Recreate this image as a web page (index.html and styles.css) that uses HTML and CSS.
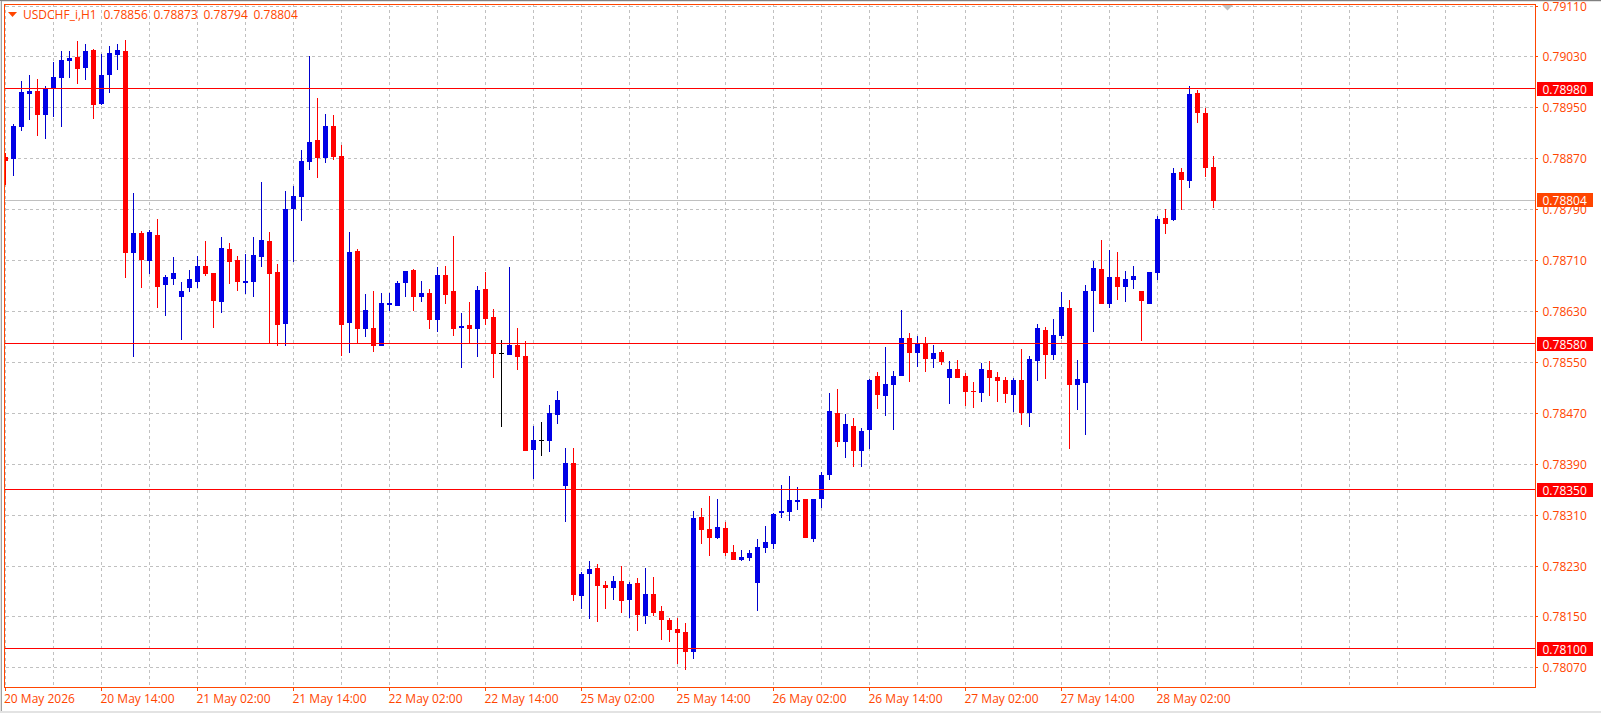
FILE: index.html
```html
<!DOCTYPE html>
<html lang="en">
<head>
<meta charset="utf-8">
<title>USDCHF_i,H1</title>
<link rel="stylesheet" href="styles.css">
</head>
<body>
<main class="window">
<svg class="chart" id="chart" width="1601" height="713" viewBox="0 0 1601 713" xmlns="http://www.w3.org/2000/svg">
  <g id="grid" class="grid"></g>
  <path class="bid-line" d="M5 200.5H1535"/>
  <g id="candles"></g>
  <g id="levels" class="level"></g>
  <path class="shift" d="M1222 5H1233L1227.5 10.5Z"/>
  <rect class="frame" x="4.5" y="4.5" width="1531" height="683"/>
  <g id="ticks" class="tick"></g>
  <g id="price-labels" class="axis-text"></g>
  <g id="time-labels" class="axis-text"></g>
  <g id="tags"></g>
  <path class="legend-arrow" d="M8 12H17L12.5 17Z"/>
  <text class="axis-text" x="23" y="19">USDCHF_i,H1</text>
  <text class="axis-text" x="103.5" y="19">0.78856</text>
  <text class="axis-text" x="153.5" y="19">0.78873</text>
  <text class="axis-text" x="203.5" y="19">0.78794</text>
  <text class="axis-text" x="253.5" y="19">0.78804</text>
</svg>
</main>
<script src="chart.js"></script>
</body>
</html>
```
FILE: styles.css
```css
html, body {
  margin: 0;
  padding: 0;
  background: #ffffff;
  overflow: hidden;
}
.window {
  width: 1601px;
  height: 713px;
}
.chart {
  display: block;
  shape-rendering: crispEdges;
}
.grid path {
  fill: none;
  stroke: #c0c0c0;
  stroke-width: 1;
  stroke-dasharray: 3 3;
}
.wick-up { fill: #0000cd; }
.body-up { fill: #0000e6; }
.wick-down, .body-down { fill: #ff0000; }
.wick-flat, .body-flat { fill: #000000; }
.bid-line {
  fill: none;
  stroke: #c0c0c0;
  stroke-width: 1;
}
.level path {
  fill: none;
  stroke: #ff0000;
  stroke-width: 1;
}
.shift { fill: #c0c0c0; shape-rendering: auto; }
.frame {
  fill: none;
  stroke: #ff4500;
  stroke-width: 1;
}
.tick path {
  fill: none;
  stroke: #ff4500;
  stroke-width: 1;
}
.axis-text {
  font-family: "Open Sans", sans-serif;
  font-size: 12px;
  fill: #ff4500;
}
.tag-level { fill: #ff0000; }
.tag-bid { fill: #ff4500; }
.tag-text {
  font-family: "Open Sans", sans-serif;
  font-size: 12px;
  fill: #ffffff;
}
.legend-arrow { fill: #ff4500; shape-rendering: auto; }
.edge-dark { fill: #808080; }
.edge-mid { fill: #a0a0a0; }
.edge-soft { fill: #e3e3e3; }
```
FILE: chart.js
```js
(function () {
  var NS = 'http://www.w3.org/2000/svg';
  function add(parent, tag, attrs, text) {
    var el = document.createElementNS(NS, tag);
    for (var k in attrs) el.setAttribute(k, attrs[k]);
    if (text) el.textContent = text;
    parent.appendChild(el);
    return el;
  }
  var $ = function (id) { return document.getElementById(id); };

  // window edges
  var svg = $('chart');
  add(svg, 'rect', { 'class': 'edge-soft', x: 0, y: 1, width: 1601, height: 1 });
  add(svg, 'rect', { 'class': 'edge-soft', x: 0, y: 0, width: 1, height: 713 });
  add(svg, 'rect', { 'class': 'edge-mid', x: 1, y: 1, width: 1, height: 712 });
  add(svg, 'rect', { 'class': 'edge-dark', x: 0, y: 0, width: 1601, height: 1 });
  add(svg, 'rect', { 'class': 'edge-soft', x: 0, y: 711, width: 1601, height: 2 });

  // grid
  var gridY = [6, 56, 107, 158, 209, 260, 311, 362, 413, 464, 515, 566, 616, 667];
  var grid = $('grid');
  gridY.forEach(function (y) {
    add(grid, 'path', { d: 'M6 ' + (y + 0.5) + 'H1535' });
  });
  for (var gx = 5; gx < 1535; gx += 48) {
    add(grid, 'path', { d: 'M' + (gx + 0.5) + ' 4V687' });
  }

  // candles: colour, wick top, body top, body bottom, wick bottom, measured on a 3x scale
  var U = 'up', D = 'down', F = 'flat';
  var groups = [
    [0, [
      [D,460,470,483,555],[U,372,378,476,528],[U,243,276,381,393],[U,225,273,282,360],
      [D,237,273,345,408],[U,258,267,345,417],[U,186,231,267,351],[U,153,180,234,381],
      [U,153,174,183,234],[D,123,171,207,252],[U,132,153,204,240],[D,147,150,315,357],
      [U,162,225,312,315],[U,138,159,225,279],[U,132,150,165,210],[D,120,153,759,834],
      [U,579,699,759,1070],[D,693,699,780,864],[U,690,696,783,822],[D,657,705,861,924],
      [U,825,831,855,948],[U,771,819,837,855],[U,846,873,891,1020],[U,810,837,864,876],
      [U,768,798,846,864],[D,723,798,822,828],[D,819,819,903,984],[U,711,744,906,939],
      [D,729,747,786,852],[D,768,780,846,873],[U,762,843,849,882],[U,711,765,846,891],
      [U,546,720,771,801],[D,696,723,822,1030],[D,792,816,975,1038],[U,573,627,972,1038],
      [U,558,588,627,786],[U,450,483,591,663],[U,168,426,486,510],[D,294,420,474,534],
      [U,342,378,474,489],[D,345,378,471,480],[D,435,468,975,1067],[U,696,756,969,1058],
      [D,747,753,987,1030],[U,882,930,987,1011],[D,873,984,1038,1055],[U,879,909,1038,1038],
      [U,879,909,915,933],[U,843,849,918,918]
    ]],
    [690, [
      [U,123,123,159,201],[D,117,120,201,243],[U,153,189,201,216],[D,177,189,270,297],
      [U,111,135,270,306],[D,108,135,195,222],[D,18,183,297,318],[U,249,288,294,414],
      [D,216,285,297,340],[U,168,180,297,381],[D,126,177,267,285],[D,237,261,372,444],
      [F,330,369,372,591],[U,111,345,375,375],[D,294,345,381,420],[D,333,378,663,663],
      [U,588,630,660,747],[F,576,630,633,678],[U,525,549,633,666],[U,483,510,555,582]
    ]],
    [1290, [
      [U,54,99,168,276],[D,54,99,495,513],[U,426,432,498,537],[U,393,417,432,567],
      [D,402,414,468,576],[D,453,465,474,537],[U,438,453,474,510],[D,408,453,513,549],
      [U,456,462,510,564],[D,444,459,555,603],[U,414,492,558,582],[D,441,492,549,558],
      [D,528,543,570,630],[D,564,570,600,636],[D,564,597,609,702],[D,579,606,666,720],
      [U,243,264,666,687],[D,234,261,300,342],[D,198,297,324,378],[U,207,291,324,327],
      [D,276,294,369,378],[D,345,366,390,390],[U,360,381,390,393],[U,360,369,384,393],
      [U,327,351,459,543],[U,288,336,354,369],[U,249,252,342,357],[U,165,243,249,264],
      [U,138,210,246,273],[U,171,210,216,240],[D,207,207,324,324],[U,207,207,327,336],
      [U,126,135,207,234]
    ]],
    [870, [
      [U,309,363,555,570],[D,297,369,456,471],[U,372,402,456,504],[D,384,408,483,531],
      [U,414,423,483,531],[U,267,270,420,477],[D,246,258,315,357],[U,171,282,318,378],
      [U,243,258,285,420],[U,60,144,258,258],[D,129,144,189,276],[U,138,159,189,231],
      [D,141,160,207,246],[U,165,189,207,234],[D,180,186,216,225],[U,213,237,264,342],
      [D,210,237,264,264],[D,249,258,306,348],[D,276,303,306,354],[U,219,237,309,336],
      [D,213,240,264,318],[D,246,261,273,336],[D,261,270,312,339],[U,264,270,315,366],
      [D,177,270,369,405],[U,198,207,369,411],[U,102,114,213,273],[D,111,120,195,267],
      [U,87,135,195,210],[U,6,51,138,147],[D,30,54,285,477],[U,210,267,285,360]
    ]],
    [210, [
      [U,645,663,939,1095],[U,573,594,663,786],[D,510,597,702,702],[U,540,621,702,714],
      [D,546,621,651,690],[U,603,627,651,696],[U,588,618,630,657],[D,663,663,693,813],
      [U,606,606,702,702],[U,438,447,609,630],[D,417,444,462,492],[U,294,309,450,453],
      [D,294,306,330,420],[U,48,72,333,354],[D,60,69,129,159],[D,114,129,294,321],
      [D,258,291,393,414]
    ]]
  ];

  var layer = $('candles');
  var k = 0;
  function px(offset, z) { return Math.round((offset + z) / 3); }
  groups.forEach(function (group) {
    var off = group[0];
    group[1].forEach(function (c) {
      var x = 5 + 8 * k;
      var wt = px(off, c[1]), bt = px(off, c[2]), bb = px(off, c[3]), wb = px(off, c[4]);
      add(layer, 'rect', { 'class': 'wick-' + c[0], x: x, y: wt, width: 1, height: Math.max(wb - wt, 1) });
      var bx = k === 0 ? x : x - 2;
      var bw = k === 0 ? 3 : 5;
      add(layer, 'rect', { 'class': 'body-' + c[0], x: bx, y: bt, width: bw, height: Math.max(bb - bt, 1) });
      k++;
    });
  });

  // horizontal levels and their price tags
  var levels = [[88, '0.78980'], [343, '0.78580'], [489, '0.78350'], [648, '0.78100']];
  var tags = $('tags');
  levels.forEach(function (l) {
    add($('levels'), 'path', { d: 'M5 ' + (l[0] + 0.5) + 'H1535' });
  });

  // price axis
  var prices = [
    [6, '0.79110'], [56, '0.79030'], [107, '0.78950'], [158, '0.78870'], [209, '0.78790'],
    [260, '0.78710'], [311, '0.78630'], [362, '0.78550'], [413, '0.78470'], [464, '0.78390'],
    [515, '0.78310'], [566, '0.78230'], [616, '0.78150'], [667, '0.78070']
  ];
  prices.forEach(function (p) {
    add($('ticks'), 'path', { d: 'M1536 ' + (p[0] + 0.5) + 'H1538' });
    add($('price-labels'), 'text', { x: 1542.5, y: p[0] + 5 }, p[1]);
  });
  levels.forEach(function (l) {
    add(tags, 'rect', { 'class': 'tag-level', x: 1537, y: l[0] - 6, width: 56, height: 14 });
    add(tags, 'text', { 'class': 'tag-text', x: 1542.5, y: l[0] + 6 }, l[1]);
  });
  add(tags, 'rect', { 'class': 'tag-bid', x: 1537, y: 193, width: 56, height: 14 });
  add(tags, 'text', { 'class': 'tag-text', x: 1542.5, y: 205 }, '0.78804');

  // time axis
  var times = ['20 May 2026', '20 May 14:00', '21 May 02:00', '21 May 14:00', '22 May 02:00',
    '22 May 14:00', '25 May 02:00', '25 May 14:00', '26 May 02:00', '26 May 14:00',
    '27 May 02:00', '27 May 14:00', '28 May 02:00'];
  times.forEach(function (t, i) {
    var x = 5 + 96 * i;
    add($('ticks'), 'path', { d: 'M' + (x + 0.5) + ' 688V691' });
    add($('time-labels'), 'text', { x: i === 0 ? 4 : x - 0.5, y: 703 }, t);
  });
})();
```
